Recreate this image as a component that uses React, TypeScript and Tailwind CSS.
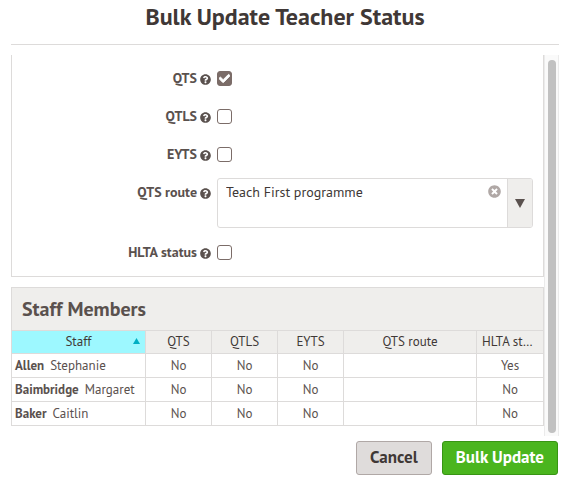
import { useState } from "react";
import type { ReactNode } from "react";
import { FaCheck, FaQuestionCircle, FaTimesCircle } from "react-icons/fa";

type StaffMember = {
  id: number;
  surname: string;
  forename: string;
  qts: string;
  qtls: string;
  eyts: string;
  route: string;
  hlta: string;
};

const STAFF: StaffMember[] = [
  { id: 1, surname: "Allen", forename: "Stephanie", qts: "No", qtls: "No", eyts: "No", route: "", hlta: "Yes" },
  { id: 2, surname: "Baimbridge", forename: "Margaret", qts: "No", qtls: "No", eyts: "No", route: "", hlta: "No" },
  { id: 3, surname: "Baker", forename: "Caitlin", qts: "No", qtls: "No", eyts: "No", route: "", hlta: "No" },
];

const HEAD_CELL =
  "h-[23px] truncate border border-[#dddbda] bg-[#efeeec] px-[5px] text-center font-normal text-[#403836]";
const CELL = "h-6 border border-[#dddbda] px-[5px] text-center";

type FieldRowProps = {
  id: string;
  label: string;
  children: ReactNode;
};

// Label column on the left, control on the right
function FieldRow({ id, label, children }: FieldRowProps) {
  return (
    <div className="flex items-start">
      <label
        htmlFor={id}
        className="flex h-7 w-[205px] shrink-0 items-center justify-end gap-[3px] pr-[6px] text-sm font-bold"
      >
        {label}
        <FaQuestionCircle className="mt-[2px] size-[11px]" />
      </label>
      {children}
    </div>
  );
}

type CheckFieldProps = {
  id: string;
  label: string;
  defaultChecked?: boolean;
};

function CheckField({ id, label, defaultChecked }: CheckFieldProps) {
  return (
    <FieldRow id={id} label={label}>
      <span className="relative flex h-7 items-center">
        <input
          id={id}
          type="checkbox"
          defaultChecked={defaultChecked}
          className="peer size-[15px] appearance-none rounded-[3px] border border-[#7b6c68] bg-white checked:bg-[#7b6c68]"
        />
        <FaCheck className="pointer-events-none absolute left-[2px] hidden size-[11px] stroke-current stroke-[40] text-white peer-checked:block" />
      </span>
    </FieldRow>
  );
}

export default function App() {
  const [route, setRoute] = useState("Teach First programme");
  const [ascending, setAscending] = useState(true);

  const rows = [...STAFF].sort((a, b) =>
    ascending ? a.surname.localeCompare(b.surname) : b.surname.localeCompare(a.surname)
  );

  return (
    <main className="bg-white pr-[5px] pl-[11px] font-['PT_Sans',Lato,sans-serif] text-[#5a514e]">
      <h1 className="border-b border-[#dddbda] pt-[1px] pb-[11px] text-center text-2xl leading-8 font-bold text-[#403836]">
        Bulk Update Teacher Status
      </h1>

      <div className="mt-[10px] flex">
        <div className="min-w-0 grow pb-[10px]">
          {/* Status fields */}
          <form className="flex flex-col gap-[10px] border border-t-0 border-[#dddbda] pt-[9px] pr-[10px] pb-[10px]">
            <CheckField id="qts" label="QTS" defaultChecked />
            <CheckField id="qtls" label="QTLS" />
            <CheckField id="eyts" label="EYTS" />
            <FieldRow id="route" label="QTS route">
              <div className="relative min-w-0 grow">
                <select
                  id="route"
                  value={route}
                  onChange={(e) => setRoute(e.target.value)}
                  className="block h-[50px] w-full appearance-none rounded-[3px] border border-[#dddbda] bg-white pr-12 pb-[22px] pl-2 text-sm text-[#403836]"
                >
                  <option value=""></option>
                  <option>Teach First programme</option>
                </select>
                <button
                  type="button"
                  aria-label="Clear"
                  onClick={() => setRoute("")}
                  className="absolute top-[7px] right-[32px] text-[#b0a8a6]"
                >
                  <FaTimesCircle className="size-[13px]" />
                </button>
                <span className="pointer-events-none absolute inset-y-px right-px flex w-[25px] items-center justify-center rounded-r-[2px] border-l border-[#dddbda] bg-[#efeeec]">
                  <svg viewBox="0 0 10 9" className="h-[9px] w-[10px] fill-[#5a514e]">
                    <path d="M0 0h10L5 9z" />
                  </svg>
                </span>
              </div>
            </FieldRow>
            <CheckField id="hlta" label="HLTA status" />
          </form>

          {/* Staff list */}
          <section className="mt-[10px]">
            <h2 className="border border-b-0 border-[#dddbda] bg-[#efeeec] px-[10px] py-2 text-xl leading-[26px] font-bold">
              Staff Members
            </h2>
            <table className="w-full table-fixed border-collapse text-[13px] leading-4">
              <colgroup>
                <col className="w-[134px]" />
                <col className="w-[66px]" />
                <col className="w-[66px]" />
                <col className="w-[66px]" />
                <col />
                <col className="w-[67px]" />
              </colgroup>
              <thead>
                <tr>
                  <th className="h-[23px] border border-[#dddbda] bg-[#9df8ff] p-0 font-normal text-[#403836]">
                    <button
                      type="button"
                      onClick={() => setAscending((prev) => !prev)}
                      className="relative block w-full text-center"
                    >
                      Staff
                      <svg
                        viewBox="0 0 7 6"
                        className={`absolute top-[4px] right-[5px] h-[6px] w-[7px] fill-[#00afc3] ${ascending ? "" : "rotate-180"}`}
                      >
                        <path d="M3.5 0L7 6H0z" />
                      </svg>
                    </button>
                  </th>
                  <th className={HEAD_CELL}>QTS</th>
                  <th className={HEAD_CELL}>QTLS</th>
                  <th className={HEAD_CELL}>EYTS</th>
                  <th className={HEAD_CELL}>QTS route</th>
                  <th className={HEAD_CELL}>HLTA status</th>
                </tr>
              </thead>
              <tbody>
                {rows.map((row) => (
                  <tr key={row.id}>
                    <td className="h-6 truncate border border-[#dddbda] px-[3px]">
                      <b className="mr-[6px]">{row.surname}</b>
                      {row.forename}
                    </td>
                    <td className={CELL}>{row.qts}</td>
                    <td className={CELL}>{row.qtls}</td>
                    <td className={CELL}>{row.eyts}</td>
                    <td className={CELL}>{row.route}</td>
                    <td className={CELL}>{row.hlta}</td>
                  </tr>
                ))}
              </tbody>
            </table>
          </section>
        </div>

        {/* Scroll track */}
        <div className="flex w-[15px] shrink-0 justify-center border-x border-[#ebebeb] bg-[#fafafa] pt-[5px] pb-[3px] pl-px">
          <div className="w-2 rounded-full bg-[#c1c1c1]" />
        </div>
      </div>

      <footer className="mt-[5px] flex justify-end gap-[10px] pr-px pb-1">
        <button
          type="button"
          className="h-[34px] rounded-[3px] border border-[#b0a8a6] bg-[#dfdcdb] px-[13px] text-[17px] font-bold text-[#403836]"
        >
          Cancel
        </button>
        <button
          type="button"
          className="h-[34px] rounded-[3px] border border-[#389414] bg-[#4ab51e] px-[13px] text-[17px] font-bold text-white"
        >
          Bulk Update
        </button>
      </footer>
    </main>
  );
}
